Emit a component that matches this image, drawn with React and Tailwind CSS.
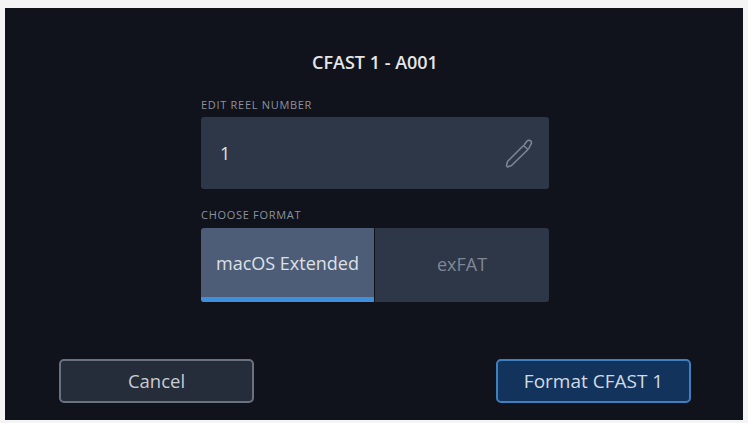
import React from "react";

const PencilIcon = () => (
  <svg width="30" height="32" viewBox="0 0 30 32" fill="none" stroke="#7f8899" strokeWidth="1.5" strokeLinejoin="round" strokeLinecap="round">
    <path d="M20.5 8.5 L25 12.5 L8.5 28.5 L4.5 30 L3.5 28.5 L4.5 24.5 Z" />
    <path d="M21.5 7.5 L24 4 C25 3 27 3 27.8 4 C28.6 5 28.6 6.5 27.8 7.5 L25.8 11.5" />
  </svg>
);

const App = () => {
  return (
    <div className="w-[748px] h-[423px] bg-[#f4f4f4] pt-[8px] pb-[3px] pl-[5px] pr-[5px] overflow-hidden font-['Open_Sans','Noto_Sans',sans-serif]">
      <div className="h-full bg-[#10131c] flex flex-col">
        <div className="w-[348px] ml-[196px]">
          <h1 className="pt-[44px] h-[64px] text-center text-[18px] leading-[20px] font-semibold text-[#e4e6e9]">
            CFAST 1 - A001
          </h1>
          <label className="block mt-[27px] h-[18px] text-[11px] leading-[12px] font-medium tracking-[0.7px] text-[#8d929c] whitespace-nowrap">
            EDIT REEL NUMBER
          </label>
          <div className="h-[72px] bg-[#2e3747] rounded-[3px] flex items-center justify-between pl-[19px] pr-[16px]">
            <span className="text-[18px] font-medium text-[#dfe2e6]">1</span>
            <PencilIcon />
          </div>
          <label className="block mt-[20px] h-[19px] text-[11px] leading-[12px] font-medium tracking-[0.7px] text-[#8d929c] whitespace-nowrap">
            CHOOSE FORMAT
          </label>
          <div className="h-[74px] flex rounded-[3px] overflow-hidden">
            <div className="w-[173px] pt-[2px] bg-[#4e5d77] border-b-[5px] border-[#3f8fdb] flex items-center justify-center text-[18px] font-medium text-[#dde1e6] whitespace-nowrap">
              macOS Extended
            </div>
            <div className="flex-1 ml-[1px] pb-[2px] bg-[#2e3747] flex items-center justify-center text-[18px] font-medium text-[#7f8796]">
              exFAT
            </div>
          </div>
        </div>
        <div className="flex justify-between pl-[54px] pr-[52px] mt-[57px]">
          <button className="w-[195px] h-[44px] rounded-[5px] border-2 border-[#6a7180] bg-[#252c3a] text-[18.5px] font-medium text-[#c8ccd3]">
            Cancel
          </button>
          <button className="w-[195px] h-[44px] rounded-[5px] border-2 border-[#3f7fc0] bg-[#12335c] text-[19px] font-medium text-[#d3dae3] whitespace-nowrap">
            Format CFAST 1
          </button>
        </div>
      </div>
    </div>
  );
};

export default App;
